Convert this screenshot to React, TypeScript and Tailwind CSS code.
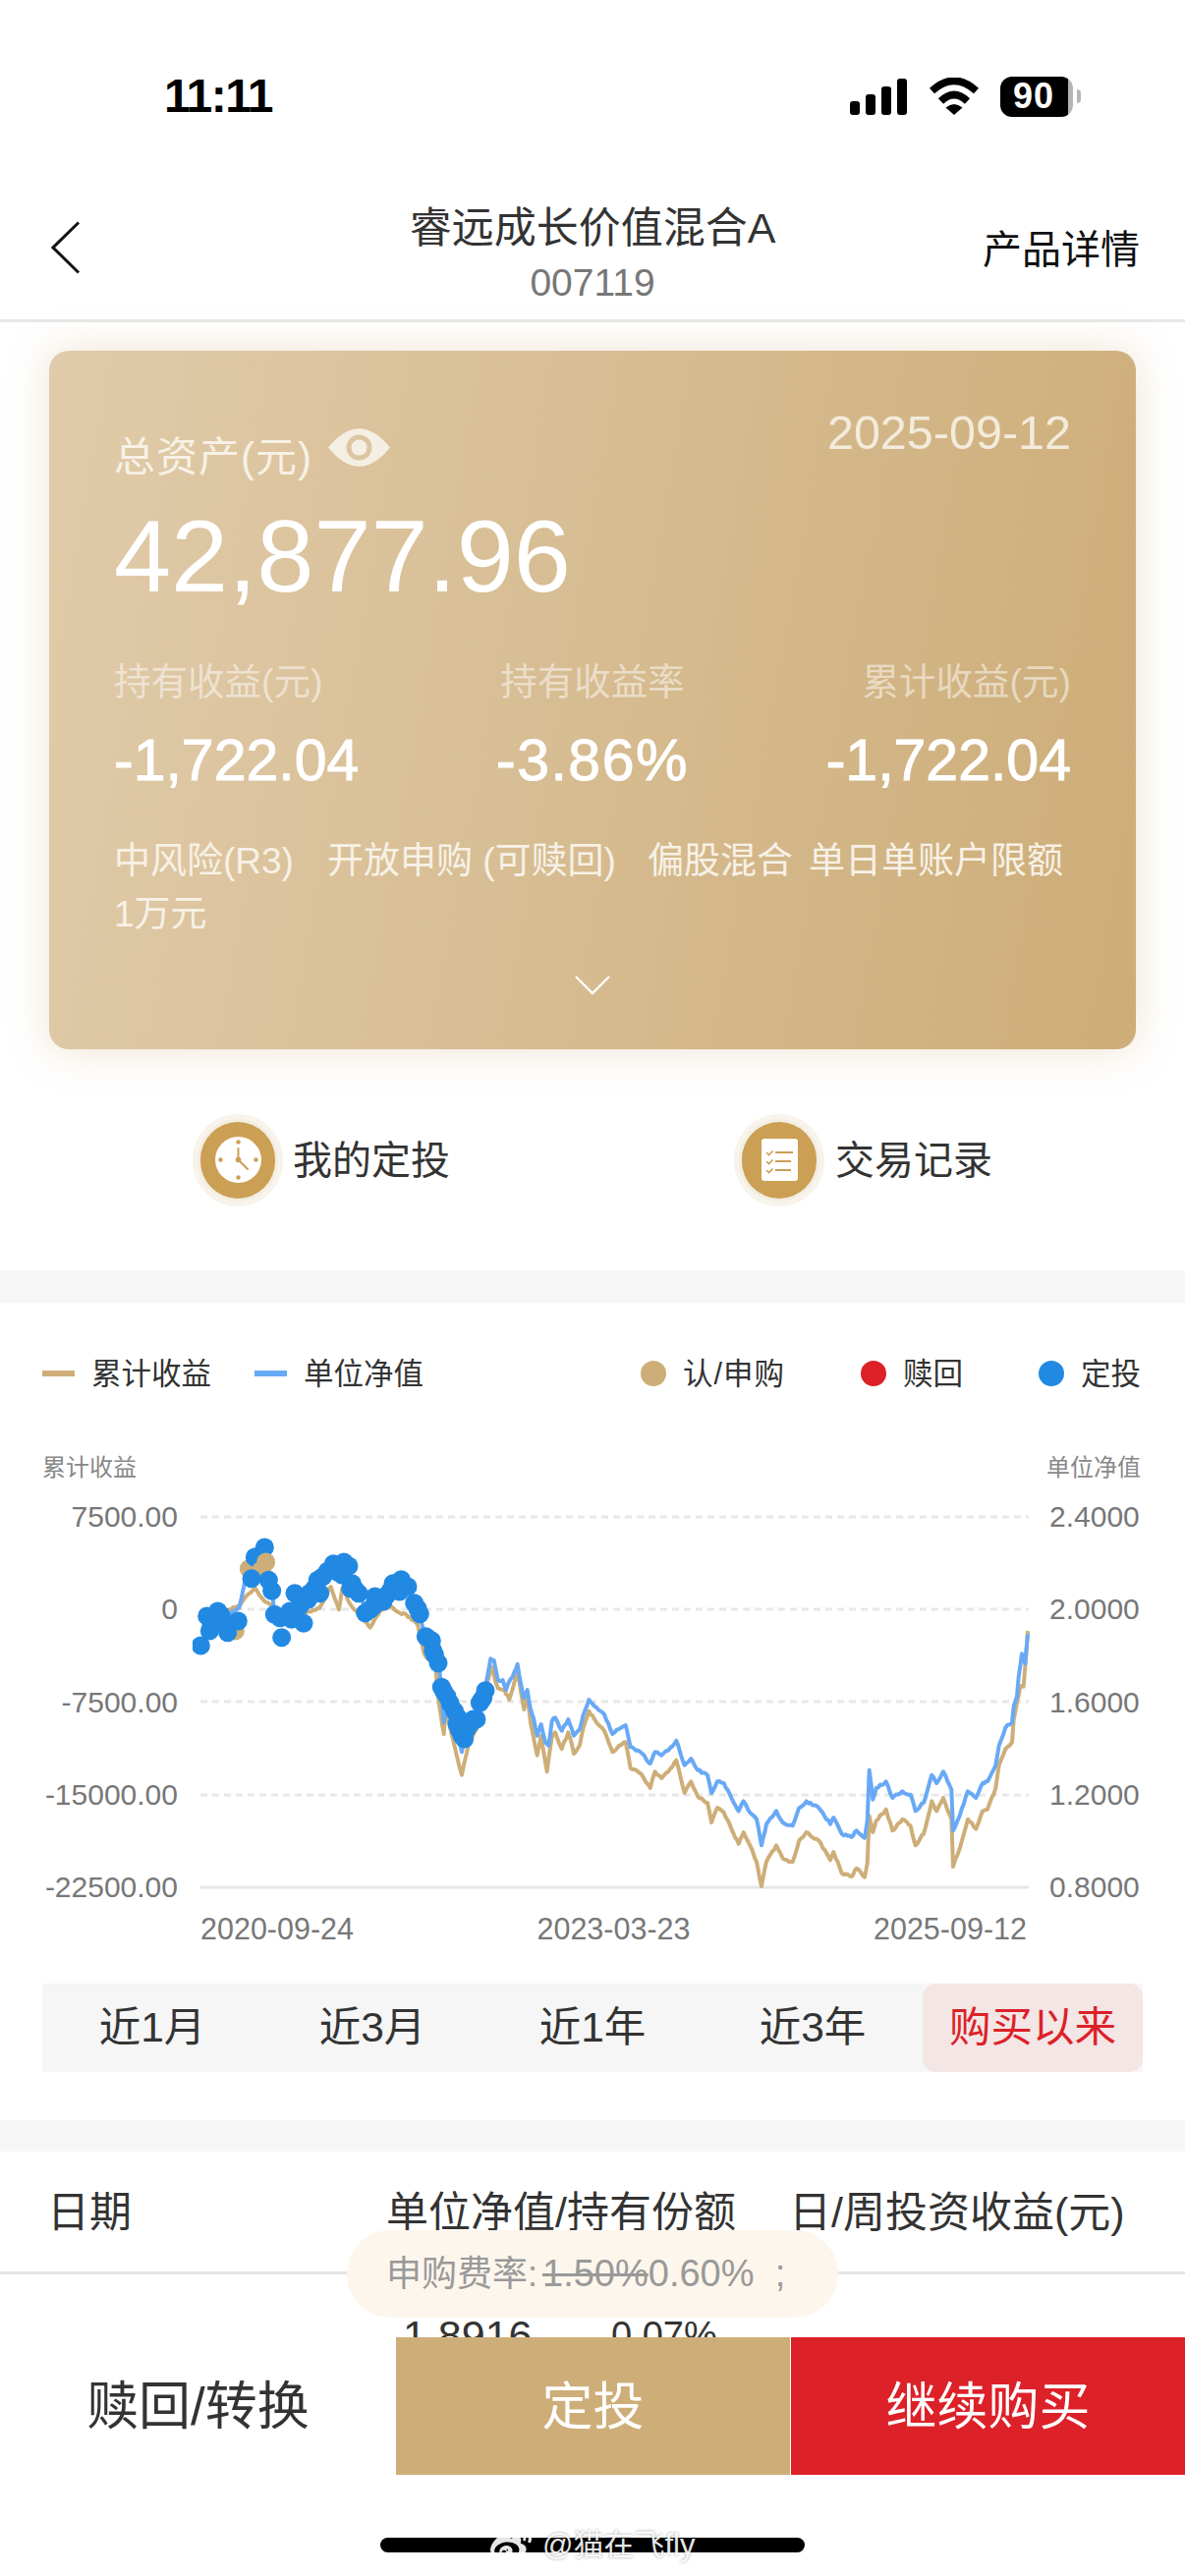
import { FaWeibo } from "react-icons/fa";

type Pt = [number, number];

// chart data traced in crop coordinates (3x), first crop starts at x=180, second at x=580
const fromLeft = (p: number[][]): Pt[] => p.map(([x, y]) => [180 + x / 3, 1520 + y / 3]);
const fromRight = (p: number[][]): Pt[] => p.map(([x, y]) => [580 + x / 3, 1520 + y / 3]);

const BLUE_LINE: Pt[] = [
  ...fromLeft([[72,465],[90,430],[130,390],[190,350],[210,260],[240,170],[270,160],[290,290],[300,380],[340,370],[380,360],[440,260],[510,220],[560,300],[575,360],[660,290],[685,260],[720,320],[740,370],[760,440],[800,520],[808,600],[815,700],[830,630],[870,790],[880,740],[940,600],[958,505],[968,510],[980,570],[995,570],[1005,600],[1012,580],[1025,560],[1040,522],[1050,580],[1060,625],[1070,600],[1080,660],[1090,690],[1100,740],[1112,705],[1125,760],[1135,770],[1145,695],[1155,685],[1175,725],[1195,690]]),
  ...fromRight([[0,705],[12,740],[30,720],[40,680],[58,630],[75,650],[105,675],[130,735],[150,720],[170,708],[185,775],[215,790],[245,825],[260,790],[280,800],[300,785],[325,755],[350,830],[370,810],[390,845],[420,860],[432,915],[450,880],[470,885],[500,945],[515,970],[530,940],[550,975],[570,995],[585,1075],[600,1010],[630,970],[650,1005],[680,1015],[700,960],[722,940],[760,960],[795,1010],[805,990],[830,1040],[860,1050],[875,1030],[900,1052],[908,1000],[914,845],[925,935],[935,900],[965,880],[985,930],[1015,910],[1040,920],[1055,970],[1080,945],[1105,860],[1120,885],[1140,850],[1165,905],[1170,1030],[1190,985],[1215,910],[1240,930],[1260,885],[1275,880],[1300,830],[1310,770],[1330,715],[1350,700],[1355,650],[1365,620],[1370,560],[1380,490],[1390,520],[1398,430]]),
];

const TAN_LINE: Pt[] = [
  ...fromLeft([[72,360],[160,355],[190,345],[215,310],[240,290],[260,320],[285,340],[340,380],[435,350],[470,285],[495,355],[505,290],[530,340],[580,395],[590,410],[620,360],[650,345],[680,365],[700,370],[735,400],[755,490],[790,530],[800,640],[815,735],[820,660],[870,860],[890,770],[915,720],[945,590],[960,530],[980,595],[1000,600],[1015,630],[1040,545],[1060,660],[1070,610],[1080,700],[1100,800],[1112,740],[1130,850],[1145,745],[1155,730],[1175,780],[1195,730]]),
  ...fromRight([[0,745],[12,795],[30,770],[40,720],[58,665],[75,690],[105,725],[130,790],[150,770],[170,760],[185,840],[215,855],[245,900],[260,850],[280,870],[300,850],[325,815],[350,915],[370,880],[390,925],[420,945],[432,1005],[450,960],[470,975],[500,1040],[515,1070],[530,1035],[550,1075],[570,1125],[585,1200],[600,1125],[630,1075],[650,1115],[680,1125],[700,1060],[722,1035],[760,1060],[795,1120],[805,1095],[830,1160],[860,1170],[875,1145],[900,1172],[908,1130],[914,985],[925,1035],[935,1000],[965,965],[985,1030],[1015,995],[1040,1015],[1055,1075],[1080,1040],[1105,940],[1120,970],[1140,930],[1165,995],[1170,1140],[1190,1085],[1215,995],[1240,1025],[1260,970],[1275,965],[1300,900],[1310,830],[1330,780],[1350,760],[1355,690],[1365,640],[1375,590],[1385,590],[1390,530],[1398,420]]),
];

const BLUE_DOTS_BACK = fromLeft([[238,195],[268,165]]);
const TAN_DOTS_BACK = fromLeft([[220,230],[178,420]]);
const TAN_DOTS_FRONT = fromLeft([[258,235],[272,210]]);
const BLUE_DOTS = fromLeft([[73,465],[92,375],[100,420],[125,360],[105,400],[140,390],[155,425],[120,385],[110,375],[135,372],[148,405],[187,390],[228,260],[280,265],[290,298],[298,370],[320,440],[315,380],[345,360],[350,385],[387,397],[360,305],[375,345],[400,325],[405,305],[420,290],[430,265],[437,305],[445,255],[460,238],[478,215],[510,210],[525,222],[490,240],[505,250],[535,275],[555,305],[530,290],[545,295],[575,365],[590,355],[600,345],[605,315],[615,328],[630,330],[640,312],[650,300],[660,275],[672,295],[685,263],[680,300],[692,282],[705,285],[725,335],[735,352],[742,368],[760,437],[770,445],[778,450],[782,480],[787,493],[798,518],[808,592],[815,605],[825,620],[835,642],[848,665],[855,705],[858,685],[862,722],[870,740],[878,750],[885,720],[895,705],[905,690],[915,690],[925,640],[930,632],[935,625],[942,602]]);

// daily wiggle between the traced points
function toPolyline(points: Pt[]) {
  const out: string[] = [];
  let seed = 7;
  for (let i = 0; i < points.length - 1; i++) {
    const [x0, y0] = points[i];
    const [x1, y1] = points[i + 1];
    const steps = Math.max(1, Math.round((x1 - x0) / 2));
    for (let s = 0; s < steps; s++) {
      seed = (seed * 16807) % 2147483647;
      const n = s === 0 ? 0 : ((seed % 1000) / 1000 - 0.5) * 2.4;
      out.push(`${(x0 + ((x1 - x0) * s) / steps).toFixed(1)},${(y0 + ((y1 - y0) * s) / steps + n).toFixed(1)}`);
    }
  }
  const last = points[points.length - 1];
  out.push(`${last[0]},${last[1]}`);
  return out.join(" ");
}

const GRID_Y = [1544, 1638, 1732, 1827];
const LEFT_AXIS = ["7500.00", "0", "-7500.00", "-15000.00", "-22500.00"];
const RIGHT_AXIS = ["2.4000", "2.0000", "1.6000", "1.2000", "0.8000"];
const TABS = ["近1月", "近3月", "近1年", "近3年", "购买以来"];

function StatusIcons() {
  return (
    <div className="flex items-center">
      <svg width="58" height="37" viewBox="0 0 58 37">
        <rect x="0" y="23" width="10" height="14" rx="3" fill="#000" />
        <rect x="16" y="16" width="10" height="21" rx="3" fill="#000" />
        <rect x="32" y="8" width="10" height="29" rx="3" fill="#000" />
        <rect x="48" y="0" width="10" height="37" rx="3" fill="#000" />
      </svg>
      <svg className="ml-[22px]" width="52" height="38" viewBox="0 0 52 38">
        <path d="M3.5 13.5 Q26 -7 48.5 13.5" fill="none" stroke="#000" strokeWidth="7.5" />
        <path d="M12.5 24 Q26 11 39.5 24" fill="none" stroke="#000" strokeWidth="7.5" />
        <path d="M17.5 30.5 Q26 23.5 34.5 30.5 L26 38 Z" fill="#000" />
      </svg>
      <div className="ml-[21px] flex h-[41px] w-[74px] items-center justify-center rounded-[12px] bg-[linear-gradient(90deg,#000_93%,#b5b5b5_93%)] pr-[6px] text-[36px] font-bold leading-none tracking-[1px] text-white">
        90
      </div>
      <div className="ml-[4px] h-[14px] w-[4px] rounded-r-full bg-[#b5b5b5]" />
    </div>
  );
}

function ClockIcon() {
  return (
    <svg width="47" height="47" viewBox="0 0 47 47">
      <circle cx="23.5" cy="23.5" r="23.5" fill="#fff" />
      <g fill="#cb9f54">
        <circle cx="23.5" cy="5.5" r="2.2" />
        <circle cx="23.5" cy="41.5" r="2.2" />
        <circle cx="5.5" cy="23.5" r="2.2" />
        <circle cx="41.5" cy="23.5" r="2.2" />
        <circle cx="23.5" cy="23.5" r="2.8" />
      </g>
      <path d="M23.5 12V23.5L33 33" fill="none" stroke="#cb9f54" strokeWidth="2" strokeLinecap="round" />
    </svg>
  );
}

function ListIcon() {
  return (
    <svg width="37" height="43" viewBox="0 0 37 43">
      <rect width="37" height="43" rx="3" fill="#fff" />
      {[15, 24, 33].map((y) => (
        <g key={y} fill="none" stroke="#cb9f54">
          <path d={`M5 ${y - 1}L7.5 ${y + 1.5}L11.5 ${y - 2.5}`} strokeWidth="1.6" />
          <path d={`M14 ${y - 1}H${y === 15 ? 32 : 30}`} strokeWidth="2" />
        </g>
      ))}
    </svg>
  );
}

function ActionIcon({ children }: { children: React.ReactNode }) {
  return (
    <div className="flex h-[94px] w-[92px] items-center justify-center rounded-full bg-[#f8f4eb]">
      <div className="flex h-[78px] w-[76px] items-center justify-center rounded-full bg-[#cb9f54] shadow-[0_0_0_3px_#f3eee2]">
        {children}
      </div>
    </div>
  );
}

function Chart() {
  return (
    <svg width="860" height="407" viewBox="196 1529 860 407">
      {GRID_Y.map((y) => (
        <line key={y} x1="204" x2="1047" y1={y} y2={y} stroke="#e8e8e8" strokeWidth="3" strokeDasharray="7 5" />
      ))}
      <line x1="204" x2="1047" y1="1921" y2="1921" stroke="#e6e6e6" strokeWidth="3" />
      <polyline points={toPolyline(TAN_LINE)} fill="none" stroke="#ceae78" strokeWidth="4" strokeLinejoin="round" />
      <polyline points={toPolyline(BLUE_LINE)} fill="none" stroke="#68a9f5" strokeWidth="4" strokeLinejoin="round" />
      {TAN_DOTS_BACK.map(([x, y]) => <circle key={`t${x}`} cx={x} cy={y} r="9.5" fill="#ceae78" />)}
      {BLUE_DOTS_BACK.map(([x, y]) => <circle key={`b${x}`} cx={x} cy={y} r="9.5" fill="#2289e3" />)}
      {TAN_DOTS_FRONT.map(([x, y]) => <circle key={`f${x}`} cx={x} cy={y} r="9.5" fill="#ceae78" />)}
      {BLUE_DOTS.map(([x, y], i) => <circle key={i} cx={x} cy={y} r="9.5" fill="#2289e3" />)}
    </svg>
  );
}

export default function App() {
  return (
    <div className="relative flex h-[2622px] w-[1206px] flex-col overflow-hidden bg-white font-['Liberation_Sans','Noto_Sans_CJK_SC',sans-serif] text-[#333]">
      <div className="h-[2379px] shrink-0 overflow-hidden">
        {/* status bar */}
        <div className="flex h-[196px] items-center justify-between pl-[167px] pr-[106px] text-black">
          <span className="text-[48px] font-bold leading-none tracking-[-1.5px]">11:11</span>
          <StatusIcons />
        </div>

        {/* nav */}
        <div className="flex h-[132px] items-start border-b-[3px] border-[#e8e8e8]">
          <div className="w-[200px] pl-[52px] pt-[29px]">
            <svg width="30" height="54" viewBox="0 0 30 54">
              <path d="M28 1.5L2 27L28 52.5" fill="none" stroke="#111" strokeWidth="3" />
            </svg>
          </div>
          <div className="flex-1 pt-[11px] text-center">
            <div className="text-[43px] leading-[50px]">睿远成长价值混合A</div>
            <div className="mt-[11px] text-[39px] leading-[40px] text-[#777]">007119</div>
          </div>
          <div className="w-[200px] whitespace-nowrap pr-[48px] pt-[33px] text-right text-[40px] leading-[50px] text-[#111]">
            <span className="-ml-[6px] mr-[6px] inline-block">产品详情</span>
          </div>
        </div>

        {/* asset card */}
        <div className="mx-[50px] mt-[29px] h-[711px] rounded-[20px] bg-[linear-gradient(100deg,#e0cbaa,#cdad78)] px-[66px] pt-[59px] text-white shadow-[0_0_40px_rgba(205,173,120,0.35)]">
          <div className="flex items-start justify-between">
            <div className="mt-[26px] flex items-center text-[42px] leading-[48px] tracking-[1px] text-[#f7f1e6]">
              <span>总资产(元)</span>
              <svg className="-mt-[22px] ml-[16px]" width="63" height="39" viewBox="0 0 63 39">
                <path d="M0 19.5Q31.5 -19 63 19.5Q31.5 58 0 19.5Z" fill="#f5efe3" />
                <circle cx="31.5" cy="19.5" r="13" fill="#dcc6a2" />
                <circle cx="31.5" cy="19.5" r="8" fill="#f5efe3" />
              </svg>
            </div>
            <div className="text-[48.5px] leading-[48px] text-[#f3ebdc]">2025-09-12</div>
          </div>
          <div className="mt-[26px] text-[104.5px] leading-[100px]">42,877.96</div>
          <div className="mt-[56px] flex justify-between">
            {[
              ["持有收益(元)", "-1,722.04", "items-start", ""],
              ["持有收益率", "-3.86%", "items-center", "tracking-[1.5px]"],
              ["累计收益(元)", "-1,722.04", "items-end", ""],
            ].map(([label, value, align, spacing]) => (
              <div key={label} className={`flex flex-col ${align}`}>
                <div className="text-[37.5px] leading-[44px] text-white/50">{label}</div>
                <div className={`mt-[26px] text-[59px] leading-[64px] [-webkit-text-stroke:1px_#fff] ${spacing}`}>{value}</div>
              </div>
            ))}
          </div>
          <div className="mt-[44px] text-[37px] leading-[54px] text-[#f7f1e6]">
            <span className="mr-[34px]">中风险(R3)</span>
            <span className="mr-[32px]">开放申购 (可赎回)</span>
            <span className="mr-[16px]">偏股混合</span>
            <span>单日单账户限额1万元</span>
          </div>
          <div className="mt-[35px] flex justify-center">
            <svg width="36" height="20" viewBox="0 0 36 20">
              <path d="M1 1L18 18L35 1" fill="none" stroke="#fff" strokeWidth="2.4" />
            </svg>
          </div>
        </div>

        {/* shortcuts */}
        <div className="flex h-[225px] items-center pl-[196px]">
          <div className="flex w-[551px] items-center gap-[10px]">
            <ActionIcon><ClockIcon /></ActionIcon>
            <span className="text-[40px] leading-none">我的定投</span>
          </div>
          <div className="flex items-center gap-[11px]">
            <ActionIcon><ListIcon /></ActionIcon>
            <span className="text-[40px] leading-none">交易记录</span>
          </div>
        </div>

        <div className="h-[33px] bg-[#f6f6f6]" />

        {/* chart */}
        <div className="h-[832px] pt-[52px]">
          <div className="flex justify-between pl-[43px] pr-[45px] text-[30.5px] leading-[40px]">
            <div className="flex items-center">
              <i className="mr-[17px] h-[6px] w-[33px] bg-[#ceae78]" />
              <span>累计收益</span>
              <i className="ml-[44px] mr-[17px] h-[6px] w-[33px] bg-[#68a9f5]" />
              <span>单位净值</span>
            </div>
            <div className="flex items-center">
              <i className="mr-[17px] h-[26px] w-[26px] rounded-full bg-[#ceae78]" />
              <span className="tracking-[1px]">认/申购</span>
              <i className="ml-[77px] mr-[17px] h-[26px] w-[26px] rounded-full bg-[#dc2128]" />
              <span>赎回</span>
              <i className="ml-[77px] mr-[17px] h-[26px] w-[26px] rounded-full bg-[#2289e3]" />
              <span>定投</span>
            </div>
          </div>
          <div className="mt-[61px] flex justify-between pl-[43px] pr-[45px] text-[24px] leading-[30px] text-[#888]">
            <span>累计收益</span>
            <span>单位净值</span>
          </div>
          <div className="mt-[20px] flex h-[407px] text-[30px] leading-[30px] text-[#777]">
            <div className="flex w-[181px] flex-col justify-between text-right">
              {LEFT_AXIS.map((v) => <span key={v}>{v}</span>)}
            </div>
            <div className="ml-[15px]"><Chart /></div>
            <div className="ml-[12px] flex flex-col justify-between">
              {RIGHT_AXIS.map((v) => <span key={v}>{v}</span>)}
            </div>
          </div>
          <div className="mt-[10px] flex justify-between pl-[204px] pr-[161px] text-[30.5px] leading-[34px] text-[#777]">
            <span>2020-09-24</span>
            <span>2023-03-23</span>
            <span>2025-09-12</span>
          </div>
          <div className="mx-[43px] mt-[39px] grid h-[90px] w-[1120px] grid-cols-5 bg-[#f6f6f6] text-[42.5px]">
            {TABS.map((t, i) => (
              <div
                key={t}
                className={i === 4 ? "flex items-center justify-center rounded-[14px] bg-[#f3e6e5] text-[#dc2128]" : "flex items-center justify-center"}
              >
                {t}
              </div>
            ))}
          </div>
        </div>

        <div className="h-[32px] bg-[#f6f6f6]" />

        {/* holdings table */}
        <div className="flex h-[125px] items-center whitespace-nowrap border-b-[3px] border-[#e5e5e5] pl-[48px] pt-[2px] text-[43px]">
          <span className="w-[345px]">日期</span>
          <span className="w-[410px]">单位净值/持有份额</span>
          <span>日/周投资收益(元)</span>
        </div>
        <div className="mt-[36px] flex items-center pl-[410px] leading-[52px]">
          <span className="w-[212px] text-[43px]">1.8916</span>
          <span className="text-[38px]">0.07%</span>
        </div>
      </div>

      {/* bottom actions */}
      <div className="flex h-[141px] shrink-0 pb-px text-[52px]">
        <div className="flex w-[403px] items-center justify-center pt-[2px] text-[53px]">赎回/转换</div>
        <div className="flex w-[401px] items-center justify-center bg-[#ceae78] pt-[2px] text-white">定投</div>
        <div className="ml-px flex flex-1 items-center justify-center bg-[#dc2128] pt-[2px] text-white">继续购买</div>
      </div>

      <div className="mx-auto mt-[63px] h-[15px] w-[432px] rounded-full bg-black" />

      {/* fee hint floats over the table */}
      <div className="absolute left-[353px] top-[2270px] flex h-[89px] w-[500px] items-center whitespace-pre rounded-[44px] bg-[#fdf6ec] pl-[40px] text-[36px] text-[#999]">
        申购费率:<span className="ml-[5px] text-[38px] line-through">1.50%</span><span className="text-[38px]">0.60%  ;</span>
      </div>

      {/* weibo watermark */}
      <div className="absolute left-[496px] top-[2570px] flex items-center gap-[8px] text-[31px] leading-[40px] text-white/90 [text-shadow:0_0_3px_rgba(0,0,0,0.4)]">
        <FaWeibo className="h-[42px] w-[48px]" />
        <span>@猫在飞fly</span>
      </div>
    </div>
  );
}
